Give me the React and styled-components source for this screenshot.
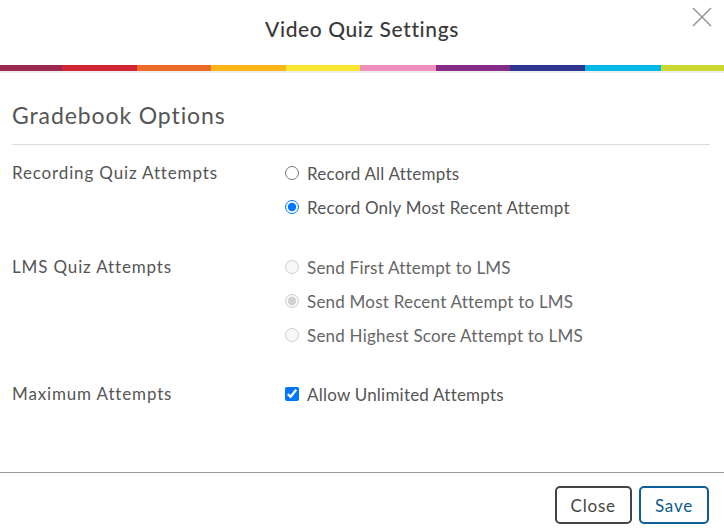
import React, { useState } from 'react';
import styled, { createGlobalStyle } from 'styled-components';

const GlobalStyle = createGlobalStyle`
  body {
    margin: 0;
    background: #fff;
    font-family: Lato, "Liberation Sans", sans-serif;
  }
`;

const STRIPES = [
  ['#9b2850', 62],
  ['#d02537', 75],
  ['#ee6a28', 74],
  ['#fbb516', 75],
  ['#fde62f', 74],
  ['#ef8fbd', 76],
  ['#852c87', 74],
  ['#2e3690', 75],
  ['#05b9e6', 76],
  ['#c9d831', 63],
];

const Modal = styled.div`
  display: flex;
  flex-direction: column;
  width: 724px;
  height: 529px;
  overflow: hidden;
`;

const Header = styled.header`
  position: relative;
  display: flex;
  justify-content: center;
  align-items: center;
  height: 57px;
  padding-bottom: 8px;
`;

const Title = styled.h1`
  margin: 0;
  font-size: 21px;
  font-weight: 500;
  color: #3a3a3a;
  letter-spacing: 0.6px;
`;

const CloseIcon = styled.button`
  position: absolute;
  top: 7px;
  right: 12px;
  width: 20px;
  height: 20px;
  padding: 0;
  border: none;
  background: transparent;
  cursor: pointer;
`;

const StripeBar = styled.div`
  display: flex;
  height: 6px;
  border-bottom: 2px solid #f0f0f0;
`;

const Stripe = styled.div`
  width: ${(p) => p.$w}px;
  background: ${(p) => p.$color};
`;

const Body = styled.main`
  flex: 1;
  padding: 28px 14px 0 12px;
`;

const SectionTitle = styled.h2`
  margin: 0;
  padding-bottom: 15px;
  font-size: 23px;
  font-weight: 400;
  color: #555;
  letter-spacing: 0.9px;
  border-bottom: 1px solid #dcdcdc;
`;

const Row = styled.div`
  display: grid;
  grid-template-columns: 273px 1fr;
  margin-top: ${(p) => p.$top}px;
`;

const Label = styled.div`
  font-size: 17px;
  color: #555;
  letter-spacing: 0.85px;
  line-height: 34px;
  height: 34px;
`;

const Options = styled.div`
  display: flex;
  flex-direction: column;
`;

const Option = styled.label`
  display: flex;
  align-items: center;
  gap: 8px;
  height: 34px;
  font-size: 17px;
  letter-spacing: 0.22px;
  color: ${(p) => (p.$disabled ? '#666' : '#555')};

  input {
    margin: 0;
    width: 14px;
    height: 14px;
  }
`;

const Footer = styled.footer`
  display: flex;
  justify-content: flex-end;
  gap: 7px;
  height: 57px;
  padding: 13px 15px 0 0;
  box-sizing: border-box;
  border-top: 1px solid #999;
`;

const Button = styled.button`
  height: 38px;
  padding: 0 14px;
  border-radius: 5px;
  border: 2px solid ${(p) => (p.$primary ? '#0b5f96' : '#444')};
  background: #fff;
  color: ${(p) => (p.$primary ? '#0b5a8e' : '#444')};
  font-family: inherit;
  font-size: 17px;
  letter-spacing: 0.8px;
  cursor: pointer;
`;

const App = () => {
  const [record, setRecord] = useState('recent');
  const [unlimited, setUnlimited] = useState(true);

  return (
    <Modal>
      <GlobalStyle />
      <Header>
        <Title>Video Quiz Settings</Title>
        <CloseIcon aria-label="Close">
          <svg width="20" height="20" viewBox="0 0 20 20">
            <path d="M1 1 L19 19 M19 1 L1 19" stroke="#999" strokeWidth="1.6" />
          </svg>
        </CloseIcon>
      </Header>
      <StripeBar>
        {STRIPES.map(([color, w]) => (
          <Stripe key={color} $color={color} $w={w} />
        ))}
      </StripeBar>
      <Body>
        <SectionTitle>Gradebook Options</SectionTitle>
        <Row $top={11}>
          <Label>Recording Quiz Attempts</Label>
          <Options>
            <Option>
              <input
                type="radio"
                name="record"
                checked={record === 'all'}
                onChange={() => setRecord('all')}
              />
              Record All Attempts
            </Option>
            <Option>
              <input
                type="radio"
                name="record"
                checked={record === 'recent'}
                onChange={() => setRecord('recent')}
              />
              Record Only Most Recent Attempt
            </Option>
          </Options>
        </Row>
        <Row $top={26}>
          <Label>LMS Quiz Attempts</Label>
          <Options>
            <Option $disabled>
              <input type="radio" name="lms" disabled />
              Send First Attempt to LMS
            </Option>
            <Option $disabled>
              <input type="radio" name="lms" disabled defaultChecked />
              Send Most Recent Attempt to LMS
            </Option>
            <Option $disabled>
              <input type="radio" name="lms" disabled />
              Send Highest Score Attempt to LMS
            </Option>
          </Options>
        </Row>
        <Row $top={25}>
          <Label>Maximum Attempts</Label>
          <Options>
            <Option>
              <input
                type="checkbox"
                checked={unlimited}
                onChange={(e) => setUnlimited(e.target.checked)}
              />
              Allow Unlimited Attempts
            </Option>
          </Options>
        </Row>
      </Body>
      <Footer>
        <Button>Close</Button>
        <Button $primary>Save</Button>
      </Footer>
    </Modal>
  );
};

export default App;
